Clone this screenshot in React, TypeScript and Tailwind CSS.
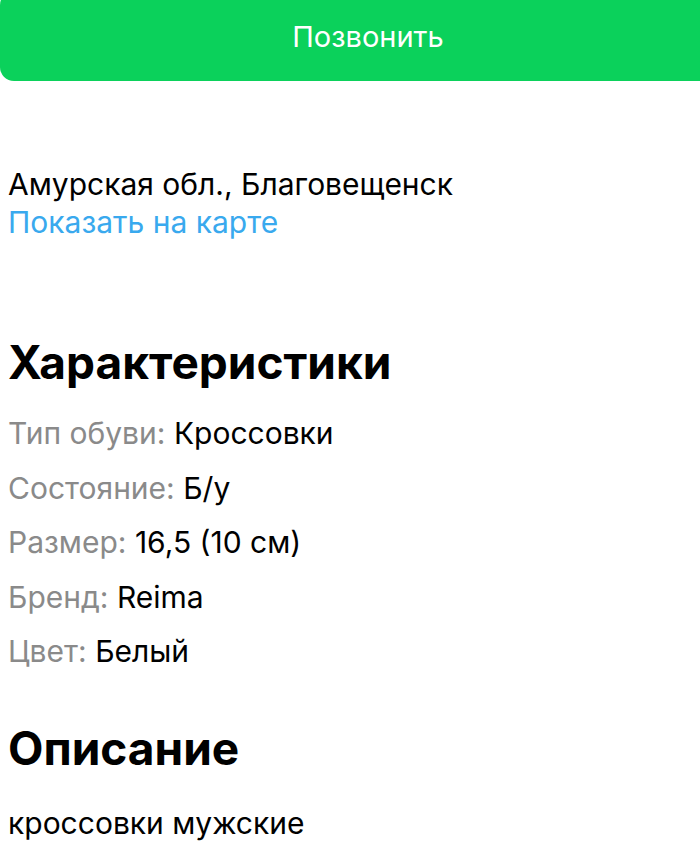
export default function App() {
  const specs: [string, string][] = [
    ["Тип обуви:", "Кроссовки"],
    ["Состояние:", "Б/у"],
    ["Размер:", "16,5 (10 см)"],
    ["Бренд:", "Reima"],
    ["Цвет:", "Белый"],
  ];
  return (
    <div
      className="w-[700px] h-[864px] overflow-hidden bg-white text-black"
      style={{ fontFamily: "Inter, 'Noto Sans', sans-serif" }}
    >
      <button className="w-[736px] h-[90px] -mt-[9px] rounded-[14px] bg-[#0bd15b] text-white text-[29px] flex items-center justify-center pt-[1px]">
        Позвонить
      </button>

      <div className="px-2 pt-[84px]">
        <div className="text-[30px] leading-[38px]">Амурская обл., Благовещенск</div>
        <div className="text-[30px] leading-[38px] text-[#39a9ee]">Показать на карте</div>

        <h2 className="mt-[95px] text-[46px] font-bold leading-[52px]">Характеристики</h2>
        <div className="mt-[18px] flex flex-col">
          {specs.map(([k, v]) => (
            <div key={k} className="text-[30px] leading-[54.5px]">
              <span className="text-[#8a8a8a]">{k}</span> <span>{v}</span>
            </div>
          ))}
        </div>

        <h2 className="mt-[43px] text-[46px] font-bold leading-[52px]">Описание</h2>
        <div className="mt-[30px] text-[30px] leading-[38px]">кроссовки мужские</div>
      </div>
    </div>
  );
}
